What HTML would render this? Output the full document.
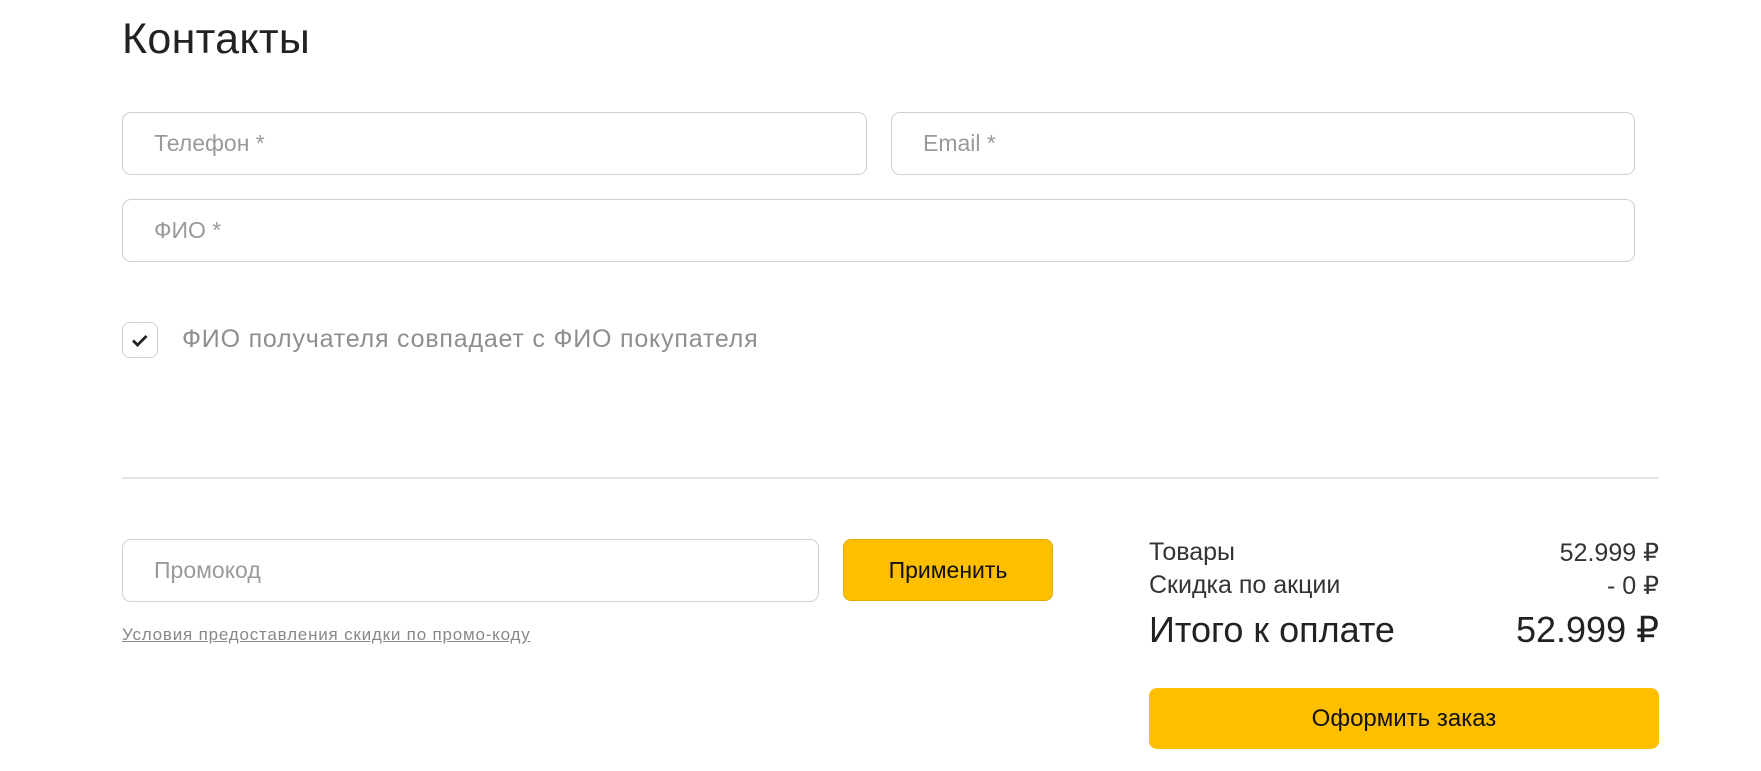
<!DOCTYPE html>
<html><head><meta charset="utf-8"><style>
*{box-sizing:border-box;margin:0;padding:0}
body{width:1761px;height:771px;background:#fff;font-family:"Liberation Sans",Arial,sans-serif;position:relative;overflow:hidden;color:#222}
.a{position:absolute}
.inp{position:absolute;border:1px solid #cfcfcf;border-radius:9px;background:#fff;color:#9a9a9a;font-size:23px;padding-left:31px;display:flex;align-items:center}
.btn{position:absolute;background:#fdbf00;border-radius:8px;display:flex;align-items:center;justify-content:center;color:#111;font-size:23px}
.row{position:absolute;left:1149px;width:510px;display:flex;justify-content:space-between;color:#333}
</style></head><body>
<div class="a" style="left:122px;top:15px;font-size:43px;color:#222;letter-spacing:0.3px">Контакты</div>
<div class="inp" style="left:122px;top:112px;width:745px;height:63px">Телефон *</div>
<div class="inp" style="left:891px;top:112px;width:744px;height:63px">Email *</div>
<div class="inp" style="left:122px;top:199px;width:1513px;height:63px">ФИО *</div>
<div class="a" style="left:122px;top:322px;width:36px;height:36px;border:1px solid #cfcfcf;border-radius:8px">
<svg width="34" height="34" viewBox="0 0 34 34"><path d="M10 17.5l4.5 4.5 9-9" fill="none" stroke="#222" stroke-width="2.8"/></svg></div>
<div class="a" style="left:182px;top:325px;font-size:25px;color:#8e8e8e;letter-spacing:0.8px">ФИО получателя совпадает с ФИО покупателя</div>
<div class="a" style="left:122px;top:477px;width:1537px;height:2px;background:#e6e6e6"></div>
<div class="inp" style="left:122px;top:539px;width:697px;height:63px">Промокод</div>
<div class="btn" style="left:843px;top:539px;width:210px;height:62px;border:1px solid #e0aa00">Применить</div>
<div class="a" style="left:122px;top:625px;font-size:17px;color:#888;text-decoration:underline;letter-spacing:0.8px">Условия предоставления скидки по промо-коду</div>
<div class="row" style="top:538px;font-size:25px"><span>Товары</span><span>52.999 ₽</span></div>
<div class="row" style="top:571px;font-size:25px"><span>Скидка по акции</span><span>- 0 ₽</span></div>
<div class="row" style="top:609px;font-size:36px;color:#222"><span>Итого к оплате</span><span>52.999 ₽</span></div>
<div class="btn" style="left:1149px;top:688px;width:510px;height:61px;font-size:24px">Оформить заказ</div>
</body></html>
